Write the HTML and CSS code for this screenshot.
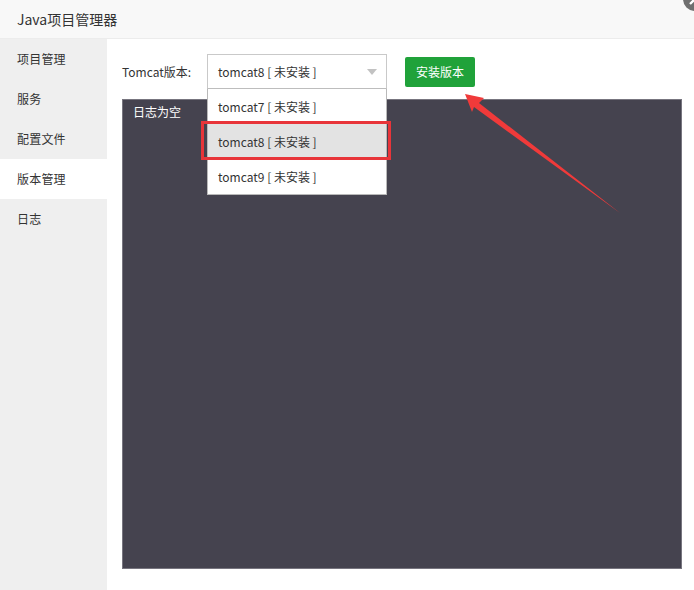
FILE: index.html
```html
<!DOCTYPE html>
<html lang="zh">
<head>
<meta charset="utf-8">
<link rel="stylesheet" href="styles.css">
</head>
<body>
<div class="window">
  <div class="titlebar">Java项目管理器<span class="close"><svg width="24" height="24" viewBox="0 0 24 24"><circle cx="12" cy="12" r="12" fill="#6f6f6f"/><path d="M7 7 L17 17 M17 7 L7 17" stroke="#fff" stroke-width="2.4"/></svg></span></div>
  <div class="main">
    <ul class="sidebar">
      <li>项目管理</li>
      <li>服务</li>
      <li>配置文件</li>
      <li class="active">版本管理</li>
      <li>日志</li>
    </ul>
    <div class="content">
      <div class="toolbar">
        <label class="label">Tomcat版本:</label>
        <div class="select">
          <div class="select-value">tomcat8 [ 未安装 ]<span class="caret"></span></div>
          <ul class="options">
            <li>tomcat7 [ 未安装 ]</li>
            <li class="selected">tomcat8 [ 未安装 ]</li>
            <li>tomcat9 [ 未安装 ]</li>
          </ul>
          <div class="highlight"></div>
        </div>
        <button class="btn">安装版本</button>
      </div>
      <div class="log">日志为空</div>
    </div>
  </div>
  <svg class="arrow" width="694" height="590" viewBox="0 0 694 590"><polygon points="465,94 484,98 479,103 620,213 474,107 472,112" fill="#f03a3a"/></svg>
</div>
</body>
</html>
```
FILE: styles.css
```css
* { box-sizing: border-box; }
html, body { margin: 0; padding: 0; background: #fff; }
body { font-family: "Noto Sans CJK SC", "Noto Sans", sans-serif; color: #333; }
.window { position: relative; width: 694px; height: 590px; overflow: hidden; display: flex; flex-direction: column; background: #fff; }
.titlebar { height: 39px; flex: none; background: #f8f8f8; border-bottom: 1px solid #ececec; padding-left: 17px; font-size: 14px; line-height: 38px; color: #333; position: relative; }
.close { position: absolute; right: -13px; top: -13px; width: 24px; height: 24px; }
.close svg { display: block; }
.main { flex: 1; display: flex; min-height: 0; }
.sidebar { list-style: none; margin: 0; padding: 0; width: 107px; flex: none; background: #efefef; }
.sidebar li { height: 40px; line-height: 40px; padding-left: 17px; font-size: 12px; color: #333; letter-spacing: 0.2px; }
.sidebar li.active { background: #fff; }
.content { flex: 1; padding: 15px 12px 21px 15px; display: flex; flex-direction: column; }
.toolbar { display: flex; align-items: center; height: 35px; flex: none; }
.label { width: 85px; font-size: 12px; color: #333; }
.select { position: relative; width: 180px; height: 35px; z-index: 2; }
.select-value { height: 35px; border: 1px solid #c9c9c9; border-bottom-color: #bdbdbd; padding-left: 10px; font-size: 12px; line-height: 33px; color: #333; background: #fff; position: relative; }
.caret { position: absolute; right: 9px; top: 14px; width: 0; height: 0; border-left: 5px solid transparent; border-right: 5px solid transparent; border-top: 6px solid #c2c2c2; }
.options { position: absolute; left: 0; top: 35px; width: 180px; margin: 0; padding: 0; list-style: none; background: #fff; border: 1px solid #b9b9b9; border-top: none; }
.options li { height: 35px; line-height: 35px; padding-left: 10px; font-size: 12px; color: #333; }
.options li.selected { background: #e3e3e3; }
.highlight { position: absolute; left: -6px; top: 67px; width: 190px; height: 39px; border: 3px solid #e8353a; }
.btn { margin-left: 18px; width: 70px; height: 30px; border: none; border-radius: 2px; background: #20a23a; color: #fff; font-family: inherit; font-size: 12px; padding: 0; }
.log { margin-top: 10px; flex: 1; background: #45434f; border: 1px solid #77757f; color: #fff; font-size: 12px; padding: 3px 10px; line-height: 18px; }
.arrow { position: absolute; left: 0; top: 0; pointer-events: none; z-index: 5; }
```
